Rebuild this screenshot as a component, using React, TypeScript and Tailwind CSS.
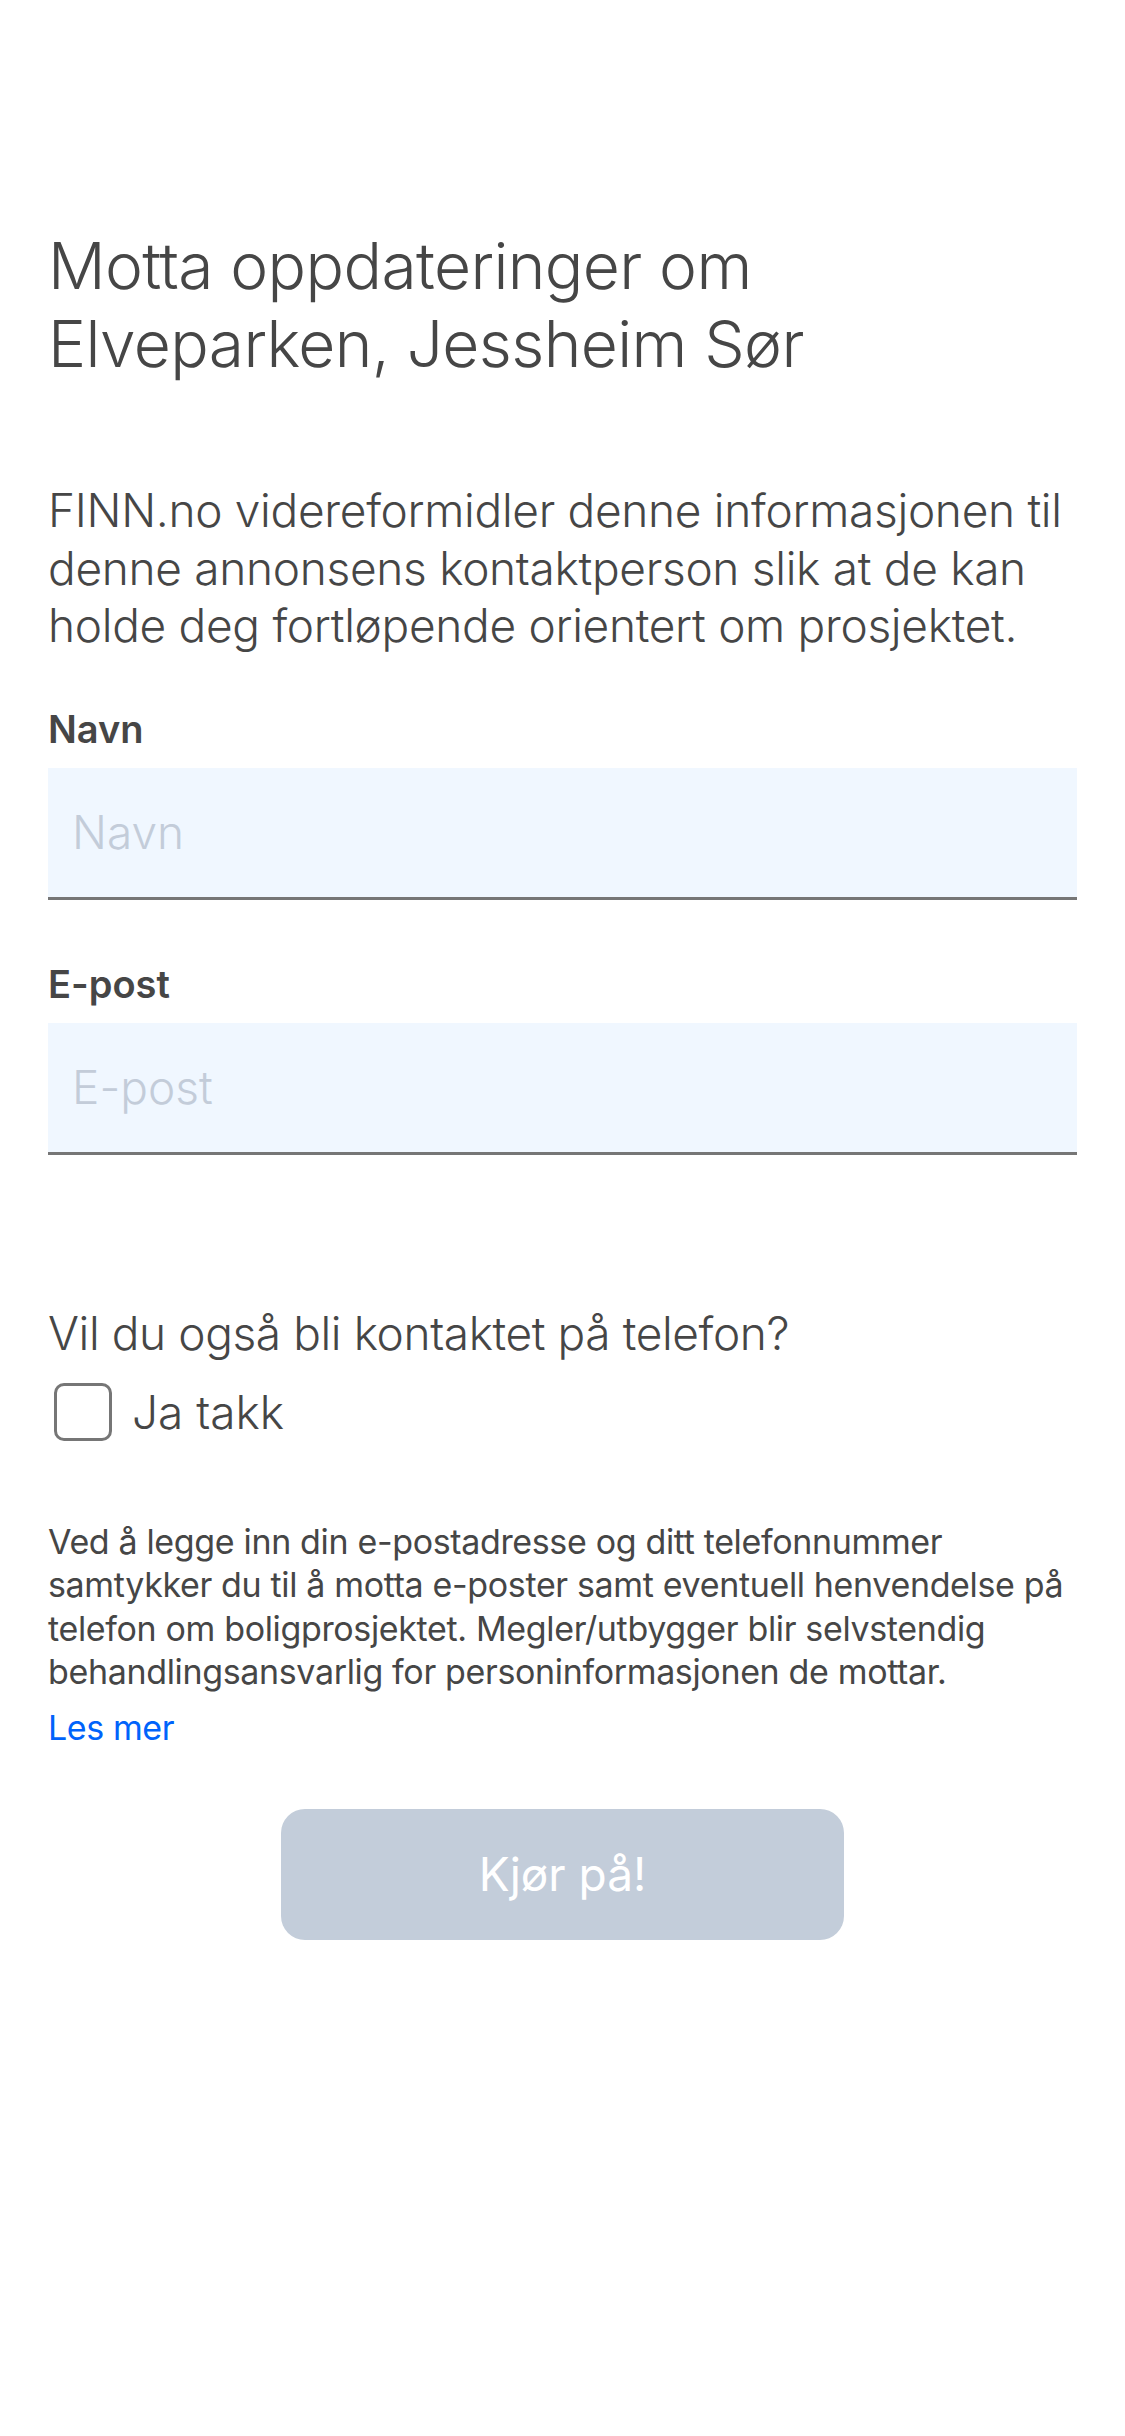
import React, { useState } from 'react';

export default function App() {
  const [name, setName] = useState('');
  const [email, setEmail] = useState('');
  const [phoneOk, setPhoneOk] = useState(false);

  const canSubmit = name.trim() !== '' && email.trim() !== '';

  return (
    <div
      className="min-h-[2436px] bg-white px-[48px] pt-[227px] text-[#464646]"
      style={{ fontFamily: 'Inter, "Noto Sans", sans-serif' }}
    >
      <h1 className="text-[64px] leading-[78px] font-light tracking-[-0.6px]">
        Motta oppdateringer om
        <br />
        Elveparken, Jessheim Sør
      </h1>

      <p className="mt-[99px] text-[46px] leading-[57.5px] font-light tracking-[-0.3px]">
        FINN.no videreformidler denne informasjonen til denne annonsens kontaktperson slik at de kan holde deg
        fortløpende orientert om prosjektet.
      </p>

      {/* Skjema */}
      <label className="mt-[52px] block text-[38px] leading-[44px] font-semibold">Navn</label>
      <input
        type="text"
        value={name}
        onChange={(e) => setName(e.target.value)}
        placeholder="Navn"
        className="mt-[17px] block h-[132px] w-full border-b-[3px] border-[#767676] bg-[#f0f7ff] px-[24px] text-[46px] font-light outline-none placeholder:text-[#c3ccd9]"
      />

      <label className="mt-[62px] block text-[38px] leading-[44px] font-semibold">E-post</label>
      <input
        type="email"
        value={email}
        onChange={(e) => setEmail(e.target.value)}
        placeholder="E-post"
        className="mt-[17px] block h-[132px] w-full border-b-[3px] border-[#767676] bg-[#f0f7ff] px-[24px] text-[46px] font-light outline-none placeholder:text-[#c3ccd9]"
      />

      <p className="mt-[149px] text-[46px] leading-[58px] font-light tracking-[-0.4px]">
        Vil du også bli kontaktet på telefon?
      </p>
      <label className="mt-[21px] flex cursor-pointer items-center gap-[20px] pl-[6px]">
        <button
          type="button"
          onClick={() => setPhoneOk(!phoneOk)}
          className={`h-[58px] w-[58px] shrink-0 rounded-[10px] border-[3px] ${
            phoneOk ? 'border-[#0063fb] bg-[#0063fb]' : 'border-[#767676] bg-white'
          }`}
        />
        <span className="text-[46px] leading-[58px] font-light">Ja takk</span>
      </label>

      <p className="mt-[79px] text-[34px] leading-[43.5px] tracking-[-0.35px]">
        Ved å legge inn din e-postadresse og ditt telefonnummer samtykker du til å motta e-poster samt eventuell
        henvendelse på telefon om boligprosjektet. Megler/utbygger blir selvstendig behandlingsansvarlig for
        personinformasjonen de mottar.
      </p>
      <a href="#" className="mt-[12px] block text-[34px] leading-[43.5px] tracking-[-0.4px] text-[#0063fb]">
        Les mer
      </a>

      <div className="mt-[60px] flex justify-center">
        <button
          type="button"
          disabled={!canSubmit}
          className="h-[131px] w-[563px] rounded-[24px] bg-[#c3cdda] text-[46px] font-normal text-white enabled:bg-[#0063fb]"
        >
          Kjør på!
        </button>
      </div>
    </div>
  );
}
